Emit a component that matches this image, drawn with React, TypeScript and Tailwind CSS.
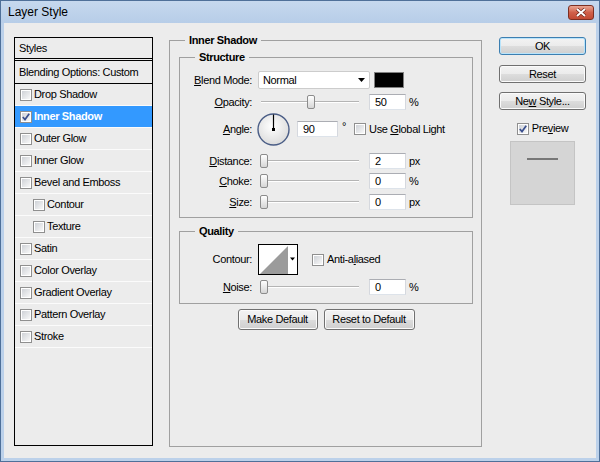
import React from "react";

const F = "font-['Liberation_Sans',Arial,sans-serif]";

const styleRows = [
  { name: "Drop Shadow" },
  { name: "Inner Shadow", checked: true, selected: true },
  { name: "Outer Glow" },
  { name: "Inner Glow" },
  { name: "Bevel and Emboss" },
  { name: "Contour", indent: true },
  { name: "Texture", indent: true },
  { name: "Satin" },
  { name: "Color Overlay" },
  { name: "Gradient Overlay" },
  { name: "Pattern Overlay" },
  { name: "Stroke" },
];

function Check({ checked = false }: { checked?: boolean }) {
  return (
    <span className="flex h-[12px] w-[12px] shrink-0 border border-[#8f8f8f] bg-white p-[1px]">
      <span className="flex h-full w-full items-center justify-center bg-gradient-to-br from-[#cfd2d7] to-[#f8f8f8]">
        {checked && (
          <svg width="8" height="8" viewBox="0 0 8 8">
            <path d="M0.8 4 L3 6.6 L7.2 0.8" fill="none" stroke="#3a4f8e" strokeWidth="1.7" />
          </svg>
        )}
      </span>
    </span>
  );
}

function Slider({ thumb }: { thumb: string }) {
  return (
    <div className="relative h-[16px] w-[98px] shrink-0">
      <div className="absolute left-0 right-0 top-[7px] h-[2px] border-t border-b border-t-[#b4b4b4] border-b-white" />
      <div
        className={`absolute top-[1px] h-[14px] w-[8px] rounded-[2px] border border-[#8c8c8c] bg-gradient-to-b from-white to-[#d6d6d6] ${thumb}`}
      />
    </div>
  );
}

function Field({ value, w }: { value: string; w: string }) {
  return (
    <div
      className={`flex h-[16px] shrink-0 items-center border border-[#abadb3] border-l-[#d5d8de] border-r-[#d5d8de] border-b-[#dde3ea] bg-white pl-[5px] ${w}`}
    >
      {value}
    </div>
  );
}

function Label({ children }: { children: React.ReactNode }) {
  return <div className="w-[72px] shrink-0 text-right">{children}</div>;
}

function Btn({ children, className = "" }: { children: React.ReactNode; className?: string }) {
  return (
    <div
      className={`flex shrink-0 items-center justify-center rounded-[3px] border bg-[linear-gradient(#f3f3f3_0%,#ebebeb_50%,#dddddd_51%,#cfcfcf_100%)] ${className}`}
    >
      {children}
    </div>
  );
}

function Dial() {
  return (
    <svg width="33" height="33" viewBox="0 0 33 33" className="shrink-0">
      <defs>
        <radialGradient id="dialfill" cx="45%" cy="40%" r="65%">
          <stop offset="0" stopColor="#ffffff" />
          <stop offset="1" stopColor="#d9d9d9" />
        </radialGradient>
      </defs>
      <circle cx="16.5" cy="16.5" r="15.5" fill="url(#dialfill)" stroke="#4a5d86" strokeWidth="1.4" />
      <line x1="16.5" y1="16.5" x2="16.5" y2="1.5" stroke="#000" strokeWidth="1.2" />
      <rect x="15" y="15" width="3" height="3" fill="#000" />
    </svg>
  );
}

function ContourPreview() {
  return (
    <svg width="40" height="31" viewBox="0 0 40 31" className="shrink-0">
      <rect x="0.5" y="0.5" width="39" height="30" fill="#fff" stroke="#000" />
      <path d="M2 30 L30 2 L30 30 Z" fill="#9b9b9b" />
      <path d="M32 13.5 h5 l-2.5 3 z" fill="#000" />
    </svg>
  );
}

export default function App() {
  return (
    <div className={`flex h-[462px] w-[600px] flex-col border border-[#4f7099] bg-[#bcd1ea] text-[11px] leading-[13px] tracking-[-0.35px] text-black ${F}`}>
      {/* title bar */}
      <div className="flex h-[22px] shrink-0 items-center justify-between bg-gradient-to-b from-[#c6d8ee] to-[#b7cde8] pl-[7px] pr-[5px]">
        <span className="text-[12px] tracking-normal">Layer Style</span>
        <div className="flex h-[15px] w-[26px] items-center justify-center rounded-[3px] border border-[#7c2f22] bg-gradient-to-b from-[#e9a592] via-[#d0604a] to-[#c24a33]">
          <svg width="12" height="9" viewBox="0 0 12 9">
            <path d="M2 1 L10 8 M10 1 L2 8" stroke="#6b2418" strokeWidth="3.4" />
            <path d="M2 1 L10 8 M10 1 L2 8" stroke="#fff" strokeWidth="2" />
          </svg>
        </div>
      </div>

      {/* client area */}
      <div className="mx-[3px] mb-[3px] flex flex-1 items-start bg-[#ececec]">
        {/* styles list */}
        <div className="ml-[10px] mt-[14px] flex h-[409px] w-[139px] shrink-0 flex-col border border-black">
          <div className="flex h-[21px] items-center border-b border-black pl-[4px]">Styles</div>
          <div className="h-[1px]" />
          <div className="flex h-[24px] items-center border-t border-b border-black pl-[4px]">
            Blending Options: Custom
          </div>
          {styleRows.map((r) => (
            <div
              key={r.name}
              className={`flex h-[22px] items-center gap-[2px] border-b border-[#fbfbfb] ${
                r.indent ? "pl-[18px]" : "pl-[5px]"
              } ${r.selected ? "bg-[#3399ff] font-bold text-white" : ""}`}
            >
              <Check checked={r.checked} />
              <span>{r.name}</span>
            </div>
          ))}
        </div>

        {/* settings */}
        <fieldset className="ml-[16px] mt-[11px] h-[413px] w-[313px] shrink-0 border border-[#a0a0a0]">
          <legend className="ml-[15px] px-[4px] font-bold leading-[12px]">Inner Shadow</legend>
          <div className="flex flex-col pl-[9px] pr-[8px]">
            <fieldset className="mt-[5px] border border-[#a0a0a0]">
              <legend className="ml-[15px] px-[4px] font-bold leading-[12px]">Structure</legend>
              <div className="flex flex-col pb-[7px] pt-[8px]">
                <div className="flex h-[18px] items-center">
                  <Label>
                    <u>B</u>lend Mode:
                  </Label>
                  <div className="ml-[6px] flex h-[18px] w-[112px] items-center justify-between rounded-[2px] border border-[#cccccc] bg-white pl-[4px] pr-[4px]">
                    <span>Normal</span>
                    <svg width="7" height="4" viewBox="0 0 7 4">
                      <path d="M0 0 H7 L3.5 4 Z" fill="#000" />
                    </svg>
                  </div>
                  <div className="ml-[4px] h-[16px] w-[30px] border border-[#808080] bg-black" />
                </div>

                <div className="mt-[5px] flex h-[16px] items-center">
                  <Label>
                    <u>O</u>pacity:
                  </Label>
                  <div className="ml-[9px]">
                    <Slider thumb="left-[46px]" />
                  </div>
                  <div className="ml-[10px]">
                    <Field value="50" w="w-[37px]" />
                  </div>
                  <span className="ml-[3px]">%</span>
                </div>

                <div className="mt-[3px] flex h-[32px] items-center">
                  <Label>
                    <u>A</u>ngle:
                  </Label>
                  <div className="ml-[5px]">
                    <Dial />
                  </div>
                  <div className="ml-[7px]">
                    <Field value="90" w="w-[41px]" />
                  </div>
                  <span className="mb-[6px] ml-[4px]">°</span>
                  <div className="ml-[8px] flex items-center gap-[3px]">
                    <Check />
                    <span>
                      Use <u>G</u>lobal Light
                    </span>
                  </div>
                </div>

                <div className="mt-[8px] flex h-[16px] items-center">
                  <Label>
                    <u>D</u>istance:
                  </Label>
                  <div className="ml-[9px]">
                    <Slider thumb="left-[-1px]" />
                  </div>
                  <div className="ml-[10px]">
                    <Field value="2" w="w-[37px]" />
                  </div>
                  <span className="ml-[3px]">px</span>
                </div>

                <div className="mt-[4px] flex h-[16px] items-center">
                  <Label>
                    <u>C</u>hoke:
                  </Label>
                  <div className="ml-[9px]">
                    <Slider thumb="left-[-1px]" />
                  </div>
                  <div className="ml-[10px]">
                    <Field value="0" w="w-[37px]" />
                  </div>
                  <span className="ml-[3px]">%</span>
                </div>

                <div className="mt-[5px] flex h-[16px] items-center">
                  <Label>
                    <u>S</u>ize:
                  </Label>
                  <div className="ml-[9px]">
                    <Slider thumb="left-[-1px]" />
                  </div>
                  <div className="ml-[10px]">
                    <Field value="0" w="w-[37px]" />
                  </div>
                  <span className="ml-[3px]">px</span>
                </div>
              </div>
            </fieldset>

            <fieldset className="mt-[7px] border border-[#a0a0a0]">
              <legend className="ml-[15px] px-[4px] font-bold leading-[12px]">Quality</legend>
              <div className="flex flex-col pb-[8px] pt-[7px]">
                <div className="flex h-[31px] items-center">
                  <Label>Contour:</Label>
                  <div className="ml-[6px]">
                    <ContourPreview />
                  </div>
                  <div className="ml-[14px] flex items-center gap-[3px]">
                    <Check />
                    <span>
                      Anti-a<u>l</u>iased
                    </span>
                  </div>
                </div>
                <div className="mt-[4px] flex h-[16px] items-center">
                  <Label>
                    <u>N</u>oise:
                  </Label>
                  <div className="ml-[9px]">
                    <Slider thumb="left-[-1px]" />
                  </div>
                  <div className="ml-[10px]">
                    <Field value="0" w="w-[37px]" />
                  </div>
                  <span className="ml-[3px]">%</span>
                </div>
              </div>
            </fieldset>

            <div className="mt-[5px] flex justify-center gap-[6px]">
              <Btn className="h-[21px] w-[80px] border-[#707070] shadow-[inset_0_0_0_1px_#fbfbfb]">Make Default</Btn>
              <Btn className="h-[21px] w-[91px] border-[#707070] shadow-[inset_0_0_0_1px_#fbfbfb]">Reset to Default</Btn>
            </div>
          </div>
        </fieldset>

        {/* buttons */}
        <div className="ml-[17px] mt-[14px] flex w-[87px] shrink-0 flex-col items-center">
          <Btn className="h-[18px] w-[87px] border-[#3c7fb1] shadow-[inset_0_0_0_1px_#b9e4fb]">OK</Btn>
          <Btn className="mt-[10px] h-[18px] w-[87px] border-[#707070] shadow-[inset_0_0_0_1px_#fbfbfb]">Reset</Btn>
          <Btn className="mt-[9px] h-[18px] w-[87px] border-[#707070] shadow-[inset_0_0_0_1px_#fbfbfb]">
            <span>
              Ne<u>w</u> Style...
            </span>
          </Btn>
          <div className="mt-[12px] flex h-[13px] items-center gap-[3px]">
            <Check checked />
            <span>
              Pre<u>v</u>iew
            </span>
          </div>
          <div className="mt-[6px] flex h-[64px] w-[65px] justify-center border border-[#c4c4c4] bg-[#d5d5d5] pt-[16px]">
            <div className="h-[2px] w-[31px] bg-[#777777]" />
          </div>
        </div>
      </div>
    </div>
  );
}
